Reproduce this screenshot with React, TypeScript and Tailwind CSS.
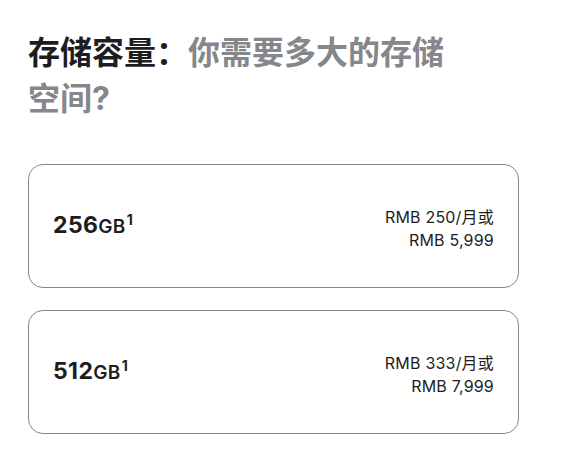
import React from "react";

const items = [
  { size: "256", monthly: "RMB 250/月或", full: "RMB 5,999" },
  { size: "512", monthly: "RMB 333/月或", full: "RMB 7,999" },
];

export default function App() {
  return (
    <div
      className="w-[585px] h-[459px] bg-white pl-[28px] pt-[30px]"
      style={{ fontFamily: "Inter, 'Noto Sans CJK SC', sans-serif" }}
    >
      <h2 className="w-[430px] text-[32px] leading-[46px] font-bold text-[#1d1d1f]">
        存储容量：<span className="text-[#86868b]">你需要多大的存储空间?</span>
      </h2>
      <div className="mt-[42px] flex flex-col gap-[22px] w-[491px]">
        {items.map((it) => (
          <div
            key={it.size}
            className="h-[124px] rounded-[15px] border border-[#86868b] flex items-center justify-between pl-[24px] pr-[24px]"
          >
            <div className="flex items-baseline text-[#1d1d1f] pb-[2px]">
              <span className="text-[23px] font-bold tracking-[0.4px]">{it.size}</span>
              <span className="text-[19px] font-semibold tracking-[0.3px]">GB</span>
              <span className="text-[14px] font-bold relative -top-[8px] ml-[1px]">1</span>
            </div>
            <div className="mt-[6px] text-right text-[16px] leading-[23px] text-[#1d1d1f] tracking-[0.2px]">
              <div>{it.monthly}</div>
              <div>{it.full}</div>
            </div>
          </div>
        ))}
      </div>
    </div>
  );
}
